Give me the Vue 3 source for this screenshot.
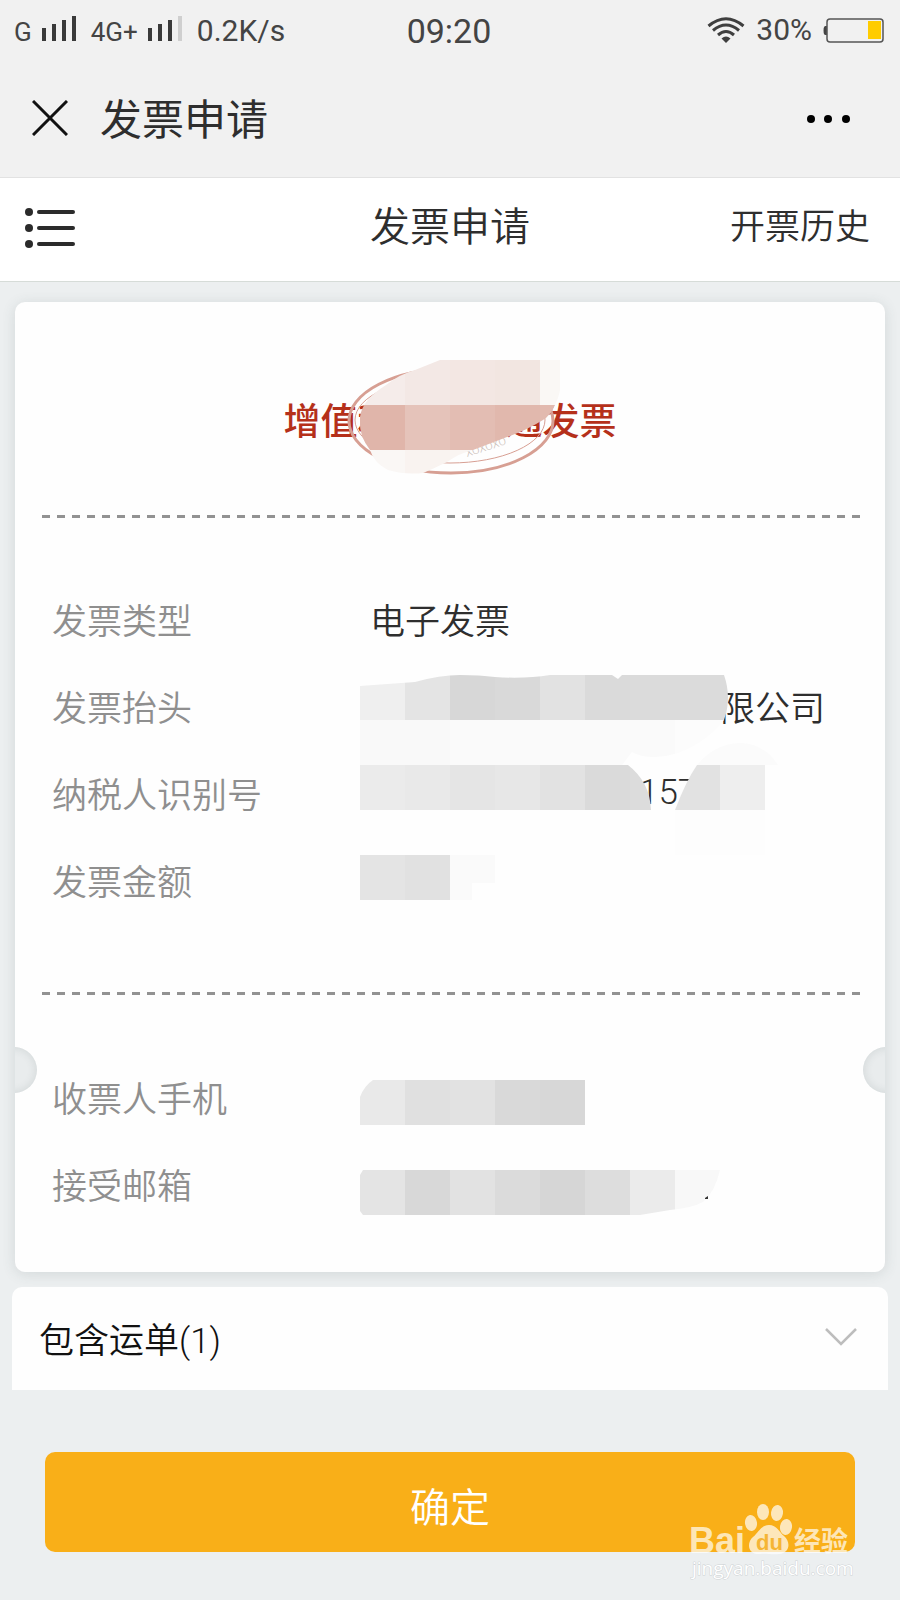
<template>
  <div class="page">
    <div class="status-bar">
      <div class="status-left">
        <span class="network">
          G
          <svg width="34" height="25" viewBox="0 0 34 25">
            <path v-for="(bar, i) in bars" :key="i" :d="bar" fill="#3a3a3a" />
          </svg>
        </span>
        <span class="network">
          4G+
          <svg width="34" height="25" viewBox="0 0 34 25">
            <path v-for="(bar, i) in bars" :key="i" :d="bar" :fill="i === 3 ? '#cfcfcf' : '#3a3a3a'" />
          </svg>
        </span>
        <span class="speed">0.2K/s</span>
      </div>
      <div class="time">09:20</div>
      <div class="status-right">
        <svg width="38" height="26" viewBox="0 0 38 26" fill="none" stroke="#3f3f3f" stroke-width="3">
          <path d="M1.5 9Q19-5.500 36.500 9" />
          <path d="M6 13.500Q19 2.500 32 13.500" />
          <path d="M11 18Q19 11 27 18" />
          <path d="M14.500 21.500Q19 17.500 23.500 21.500L19 26Z" fill="#3f3f3f" stroke="none" />
        </svg>
        <span class="percent">30%</span>
        <svg width="61" height="25" viewBox="0 0 61 25">
          <path d="M4 8H2.500Q0.500 8 0.500 12.500T2.500 17H4Z" fill="#444" />
          <rect x="4" y="1" width="56" height="23" rx="3" fill="none" stroke="#555" stroke-width="1.500" />
          <rect x="45" y="3" width="13" height="18" fill="#fc0" />
        </svg>
      </div>
    </div>

    <header class="title-bar">
      <button class="icon-btn" type="button" aria-label="关闭">
        <svg width="36" height="36" viewBox="0 0 36 36" stroke="#111" stroke-width="3">
          <path d="M1 1L35 35M35 1L1 35" />
        </svg>
      </button>
      <h1 class="app-title">发票申请</h1>
      <button class="icon-btn more" type="button" aria-label="更多">
        <svg width="44" height="10" viewBox="0 0 44 10">
          <circle cx="5" cy="5" r="4" />
          <circle cx="22" cy="5" r="4" />
          <circle cx="40" cy="5" r="4" />
        </svg>
      </button>
    </header>

    <nav class="nav-bar">
      <button class="icon-btn" type="button" aria-label="菜单">
        <svg width="50" height="40" viewBox="0 0 50 40" fill="#2b2b2b">
          <g v-for="y in [4, 20, 36]" :key="y">
            <circle cx="4" :cy="y" r="4" />
            <rect x="12" :y="y - 2" width="38" height="4" rx="2" />
          </g>
        </svg>
      </button>
      <h2 class="nav-title">发票申请</h2>
      <a class="history" href="#">开票历史</a>
    </nav>

    <main class="content">
      <section class="card">
        <div class="stamp">
          <h3 class="stamp-title">增值税电子普通发票</h3>
          <svg class="stamp-art" width="220" height="120" viewBox="340 358 220 120">
            <defs>
              <clipPath id="stamp-mask">
                <path d="M440 360H562Q563 390 555 405Q550 416 543 420Q525 431 507 437L473 450Q460 453 447 462Q435 468 423 473Q405 475 388 470Q374 463 370 450Q358 435 360 417Q362 400 386 385Q400 374 415 370Z" />
              </clipPath>
            </defs>
            <g fill="none" stroke="#d79f93">
              <ellipse cx="451" cy="421" rx="102" ry="52" stroke-width="3" />
              <ellipse cx="450" cy="420" rx="95" ry="43" stroke-width="1" />
            </g>
            <text x="467" y="457" font-size="11" fill="#c9bcb6" transform="rotate(-18 467 457)">XOXOXO</text>
            <g clip-path="url(#stamp-mask)">
              <rect v-for="(b, i) in stampBlocks" :key="i" :x="b.x" :y="b.y" width="45" height="45" :fill="b.color" />
            </g>
          </svg>
        </div>

        <div class="divider"></div>

        <div class="group">
          <dl class="rows">
            <div v-for="row in invoice" :key="row.label" class="row">
              <dt>{{ row.label }}</dt>
              <dd><span v-if="row.gap" class="gap" :style="{ width: row.gap + 'px' }"></span>{{ row.value }}</dd>
            </div>
          </dl>
          <!-- 45px mosaic grid over the values -->
          <svg class="mosaic" width="440" height="240" viewBox="360 670 440 240">
            <defs>
              <clipPath id="head-mask">
                <path d="M360 686L415 682Q440 675 460 675Q480 675 495 677Q525 679 550 675H612L618 679L622 675H724Q732 698 724 720Q715 732 700 742Q680 756 655 757Q640 757 632 752L622 765H360Z" />
              </clipPath>
              <clipPath id="tax-mask">
                <path d="M360 765H628Q650 782 651 810H360Z" />
              </clipPath>
            </defs>
            <g clip-path="url(#head-mask)">
              <rect v-for="(c, i) in headColors" :key="c + i" :x="360 + i * 45" y="675" width="45" height="45" :fill="c" />
              <rect x="360" y="720" width="90" height="45" fill="#f9f9f9" />
              <rect x="450" y="720" width="225" height="45" fill="#fafafa" />
              <rect x="675" y="720" width="60" height="45" fill="#fcfcfc" />
            </g>
            <g clip-path="url(#tax-mask)">
              <rect v-for="(c, i) in taxColors" :key="c + i" :x="360 + i * 45" y="765" width="45" height="45" :fill="c" />
            </g>
            <path d="M697 765Q715 743 742 743Q766 745 778 765Z" fill="#fbfbfb" />
            <path d="M697 765H720V810H675Q686 781 697 765Z" fill="#e2e2e2" />
            <rect x="720" y="765" width="45" height="45" fill="#eee" />
            <path d="M675 810H765V855H675Z" fill="#fdfdfd" />
            <rect x="360" y="855" width="45" height="45" fill="#e4e4e4" />
            <rect x="405" y="855" width="45" height="45" fill="#e1e1e1" />
            <path d="M450 855H495V883H472V900H450Z" fill="#fafafa" />
          </svg>
        </div>

        <div class="divider"></div>

        <div class="group receiver">
          <dl class="rows">
            <div v-for="row in receiver" :key="row.label" class="row">
              <dt>{{ row.label }}</dt>
              <dd></dd>
            </div>
          </dl>
          <svg class="mosaic" width="440" height="240" viewBox="360 1070 440 240">
            <defs>
              <clipPath id="phone-mask">
                <path d="M373 1080H585V1125H360V1097Q364 1086 373 1080Z" />
              </clipPath>
              <clipPath id="mail-mask">
                <path d="M363 1170H720Q715 1192 703 1202Q692 1208 670 1210L640 1215H363L360 1211V1175Z" />
              </clipPath>
            </defs>
            <g clip-path="url(#phone-mask)">
              <rect v-for="(c, i) in phoneColors" :key="c + i" :x="360 + i * 45" y="1080" width="45" height="45" :fill="c" />
            </g>
            <g clip-path="url(#mail-mask)">
              <rect v-for="(c, i) in mailColors" :key="c + i" :x="360 + i * 45" y="1170" width="45" height="45" :fill="c" />
            </g>
            <path d="M705 1198L708 1196V1199H705Z" fill="#333" />
          </svg>
        </div>
      </section>

      <button class="waybill" type="button" :aria-expanded="open" @click="open = !open">
        <span>包含运单(1)</span>
        <svg width="32" height="18" viewBox="0 0 32 18" fill="none" stroke="#bdbdbd" stroke-width="2.500">
          <path d="M1 1L16 16L31 1" />
        </svg>
      </button>

      <button class="submit" type="button">确定</button>
    </main>

    <svg class="watermark" width="170" height="90" viewBox="685 1500 170 90">
      <g fill="#fff" fill-opacity="0.7">
        <text class="wm-latin" x="689" y="1553" font-size="36">Bai</text>
        <ellipse cx="751" cy="1523" rx="6" ry="8" transform="rotate(-8 751 1523)" />
        <ellipse cx="763" cy="1512" rx="6" ry="8" />
        <ellipse cx="777" cy="1513" rx="6" ry="8" transform="rotate(8 777 1513)" />
        <ellipse cx="786" cy="1527" rx="6" ry="8" transform="rotate(8 786 1527)" />
        <path d="M769 1525C777 1525 779 1532 784 1536C791 1542 790 1553 779 1554C772 1555 766 1553 760 1554C748 1555 746 1543 753 1537C759 1532 761 1525 769 1525Z" />
        <text class="wm-cjk" x="794" y="1551" font-size="27">经验</text>
      </g>
      <text class="wm-latin" x="756" y="1550" font-size="22" fill="#f5b534">du</text>
      <text class="wm-url" x="692" y="1575" font-size="19">jingyan.baidu.com</text>
    </svg>
  </div>
</template>

<script setup>
import { ref } from "vue";

const open = ref(false);

const bars = ["M0 12H4V25H0Z", "M10 8H14V25H10Z", "M20 4H24V25H20Z", "M30 0H34V25H30Z"];

// gap: width of the hidden part before the visible text
const invoice = [
  { label: "发票类型", value: "电子发票" },
  { label: "发票抬头", value: "限公司", gap: 350 },
  { label: "纳税人识别号", value: "157", gap: 269 },
  { label: "发票金额", value: "" },
];

const receiver = [{ label: "收票人手机" }, { label: "接受邮箱" }];

const headColors = ["#efefef", "#e4e4e4", "#d7d7d7", "#d9d9d9", "#e2e2e2", "#dadada", "#dbdbdb", "#dbdbdb", "#dbdbdb"];
const taxColors = ["#ebebeb", "#e9e9e9", "#e5e5e5", "#e7e7e7", "#e2e2e2", "#dadada", "#dcdcdc"];
const phoneColors = ["#e9e9e9", "#e0e0e0", "#e2e2e2", "#d9d9d9", "#d7d7d7"];
const mailColors = ["#e4e4e4", "#d8d8d8", "#e2e2e2", "#dbdbdb", "#d6d6d6", "#dddddd", "#ebebeb", "#f8f8f8"];

const stampRows = [
  ["#f5ecea", "#f3e8e5", "#f3e7e3", "#f2e6e1", "#faf8f5"],
  ["#e0b5aa", "#e5c3ba", "#e3bdb3", "#e1b8ad", "#e2baaf"],
  ["#faf7f5", "#f9f3f0", "#faf5f2", "#faf5f2", "#faf5f2"],
];
const stampBlocks = stampRows.flatMap((colors, r) =>
  colors.map((color, c) => ({ x: 360 + c * 45, y: 360 + r * 45, color }))
);
</script>

<style>
body {
  background: #eceff0;
}
</style>

<style scoped>
.page {
  position: relative;
  min-height: 100vh;
  background: #eceff0;
  color: #2e2e2e;
  font-family: Roboto, "Noto Sans CJK SC", sans-serif;
  font-weight: 350;
}

h1,
h2,
h3,
dl,
dd {
  margin: 0;
  font-weight: inherit;
}

svg {
  display: block;
  flex: none;
}

button {
  padding: 0;
  border: 0;
  background: none;
  color: inherit;
  font: inherit;
  cursor: pointer;
}

.status-bar {
  display: grid;
  grid-template-columns: 1fr auto 1fr;
  align-items: center;
  height: 60px;
  padding: 0 16px 0 14px;
  background: #f1f1f1;
  color: #444;
  font-weight: 400;
  line-height: 36px;
}

.status-left {
  display: flex;
  align-items: baseline;
  gap: 15px;
  padding-top: 3px;
}

.network {
  display: flex;
  align-items: baseline;
  gap: 10px;
  font-size: 26px;
}

.speed,
.percent {
  font-size: 30px;
}

.time {
  padding-top: 2px;
  font-size: 34px;
}

.status-right {
  display: flex;
  justify-content: flex-end;
  align-items: center;
  gap: 11px;
}

.title-bar {
  display: flex;
  align-items: center;
  height: 118px;
  padding: 0 50px 2px 32px;
  border-bottom: 1px solid #e2e2e2;
  background: #f1f1f1;
  box-sizing: border-box;
}

.app-title {
  flex: 1;
  margin-left: 32px;
  padding-top: 6px;
  font-size: 42px;
  font-weight: 400;
  line-height: 48px;
}

.more {
  padding-top: 2px;
}

.nav-bar {
  display: grid;
  grid-template-columns: 1fr auto 1fr;
  align-items: center;
  padding: 24px 25px 27px;
  border-bottom: 1px solid #d6dcd8;
  background: #fff;
}

.nav-bar .icon-btn {
  justify-self: start;
}

.nav-title {
  font-size: 40px;
  line-height: 52px;
}

.history {
  justify-self: end;
  margin-right: 5px;
  color: inherit;
  font-size: 35px;
  line-height: 52px;
  text-decoration: none;
}

.content {
  display: flex;
  flex-direction: column;
  padding: 20px 12px 48px;
}

.card {
  margin: 0 3px;
  border-radius: 10px;
  background: #fefefe;
  box-shadow: 0 2px 14px rgba(60, 80, 80, 0.14);
  overflow: hidden;
}

.stamp {
  position: relative;
  padding: 101px 0 72px;
}

.stamp-title {
  color: #b5301a;
  font-size: 37px;
  font-weight: 500;
  line-height: 40px;
  text-align: center;
}

.stamp-art {
  position: absolute;
  top: 56px;
  left: 50%;
  margin-left: -110px;
}

.divider {
  height: 3px;
  margin: 0 25px;
  background: repeating-linear-gradient(to right, transparent 0 2px, #929292 2px 10px, transparent 10px 15px);
}

.group {
  position: relative;
  padding: 57px 37px 69px;
}

.receiver {
  padding: 58px 37px 45px;
}

.receiver::before,
.receiver::after {
  content: "";
  position: absolute;
  top: 52px;
  width: 46px;
  height: 46px;
  border-radius: 50%;
  background: #e9eced;
  box-shadow: inset 0 0 10px rgba(60, 80, 80, 0.14);
}

.receiver::before {
  left: -24px;
}

.receiver::after {
  right: -24px;
}

.row {
  display: flex;
  align-items: center;
  height: 87px;
  font-size: 35px;
}

.row dt {
  width: 318px;
  color: #8f8f8f;
}

.row dd {
  display: flex;
  white-space: nowrap;
}

.gap {
  flex: none;
}

.mosaic {
  position: absolute;
  top: 152px;
  left: 345px;
}

.receiver .mosaic {
  top: 75px;
}

.waybill {
  display: flex;
  align-items: center;
  justify-content: space-between;
  height: 103px;
  margin-top: 15px;
  padding: 0 31px 3px 27px;
  border-radius: 10px 10px 0 0;
  background: #fefefe;
  color: #111;
  font-size: 35px;
}

.submit {
  height: 100px;
  margin: 62px 33px 0;
  padding-top: 6px;
  border-radius: 10px;
  background: #f9af18;
  color: #fff;
  font-size: 40px;
}

.watermark {
  position: absolute;
  right: 45px;
  bottom: 10px;
  pointer-events: none;
}

.wm-latin {
  font-family: "Liberation Sans", sans-serif;
  font-weight: 700;
}

.wm-cjk {
  font-family: "Noto Sans CJK SC", sans-serif;
  font-weight: 700;
}

.wm-url {
  font-family: "Open Sans", sans-serif;
  font-weight: 400;
  fill: #fff;
  stroke: #cfd3d5;
  stroke-width: 1px;
  paint-order: stroke;
}
</style>
